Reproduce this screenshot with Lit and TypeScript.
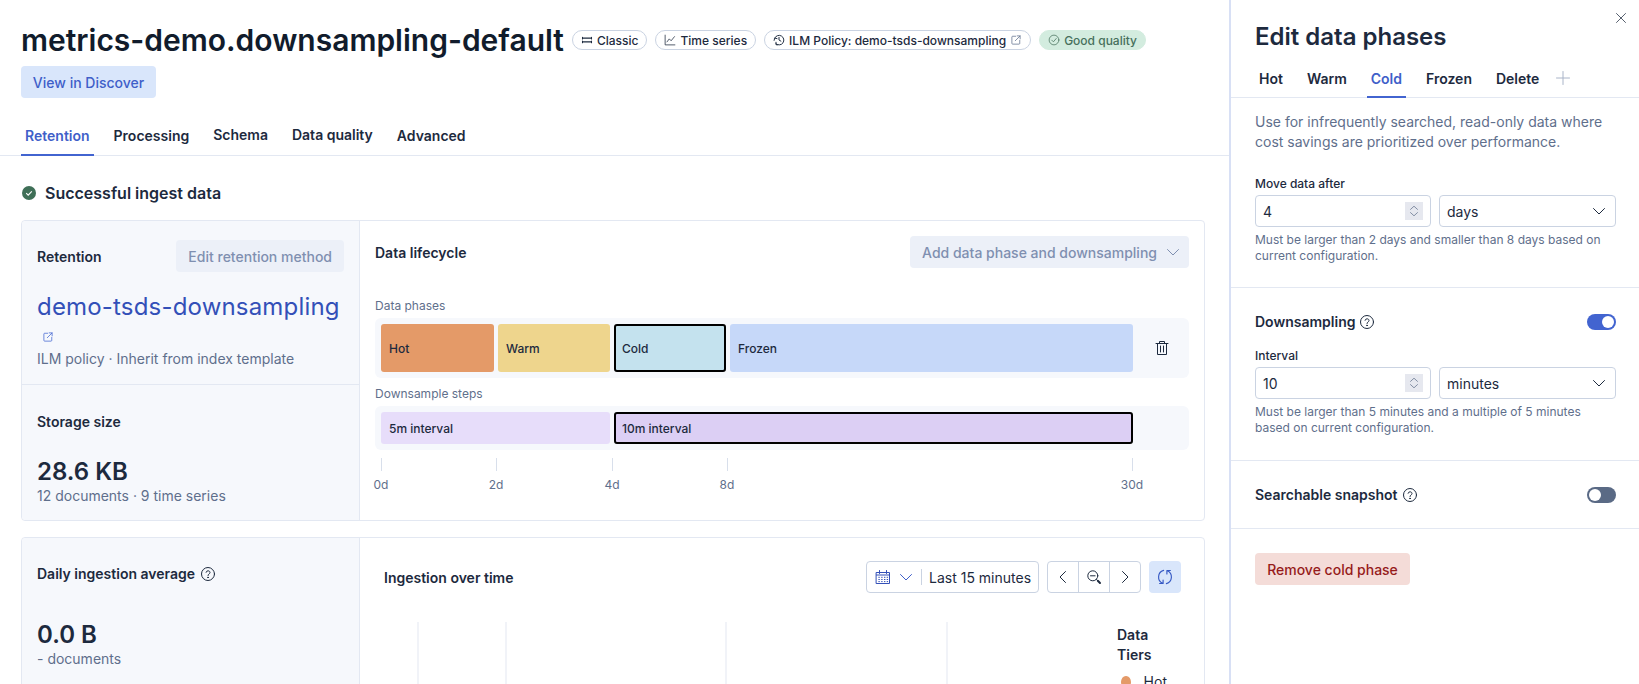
import { LitElement, html, css, svg } from "lit";
import { customElement } from "lit/decorators.js";

const ic = (size: number, body: unknown, color = "currentColor") => html`<svg class="ic" width=${size} height=${size} viewBox="0 0 16 16" fill="none" stroke=${color} stroke-width="1" stroke-linecap="round" stroke-linejoin="round">${body}</svg>`;
const popout = svg`<path d="M7.5 3H3.5a1 1 0 0 0-1 1v8.5a1 1 0 0 0 1 1H12a1 1 0 0 0 1-1V8.5"/><path d="M9.5 2.5h4v4M13.5 2.5 7 9"/>`;
const help = svg`<circle cx="8" cy="8" r="6.5"/><path d="M6.1 6.3A1.95 1.95 0 0 1 8 4.8c1.1 0 2 .7 2 1.7 0 1.5-2 1.4-2 3"/><circle cx="8" cy="11.4" r=".4" fill="currentColor"/>`;
const chevDown = svg`<path d="M2.5 5.5 8 11l5.5-5.5"/>`;
const updown = svg`<path d="M4 6.2 8 2.5l4 3.7M4 9.8l4 3.7 4-3.7"/>`;

const TICKS = [
  { label: "0d", left: 0 },
  { label: "2d", left: 115 },
  { label: "4d", left: 231 },
  { label: "8d", left: 346 },
  { label: "30d", left: 751 },
];

@customElement("app-root")
export class AppRoot extends LitElement {
  static styles = css`
    :host { display: block; height: 684px; overflow: hidden; background: #fff; color: #1d2a3e; font-family: Inter, "Liberation Sans", sans-serif; font-size: 14px; }
    * { box-sizing: border-box; }
    .ic { display: block; flex: none; }
    .page { display: grid; grid-template-columns: 1229px 1fr; height: 684px; }
    .main { min-width: 0; overflow: hidden; }
    .head { padding: 20px 0 0 21px; }
    .title-row { display: flex; align-items: center; height: 40px; }
    h1 { margin: 0; font-size: 30px; line-height: 40px; font-weight: 600; color: #111c2c; white-space: nowrap; }
    .badges { display: flex; align-items: center; gap: 8px; margin-left: 8px; }
    .badge { display: flex; align-items: center; gap: 4px; height: 20px; padding: 0 8px; border: 1px solid #cad3e2; border-radius: 10px; font-size: 12px; font-weight: 500; color: #1d2a3e; white-space: nowrap; background: #fff; }
    .badge.good { background: #d3ecdf; border-color: #d3ecdf; color: #47705c; font-weight: 500; }
    .btn { display: inline-flex; align-items: center; justify-content: center; height: 32px; border-radius: 4px; font-size: 14px; font-weight: 500; padding: 0 12px; white-space: nowrap; }
    .btn.primary { background: #d9e6fb; color: #3f5fc9; width: 135px; margin-top: 6px; }
    .btn.disabled { background: #ecf0f8; color: #7f8fb0; }
    .tabs { display: flex; height: 58px; border-bottom: 1px solid #e3e8f2; padding: 0 0 0 21px; gap: 16px; align-items: flex-end; }
    .tab { height: 36px; display: flex; align-items: center; padding: 0 4px 4px; font-weight: 600; font-size: 14px; color: #1d2a3e; border-bottom: 2px solid transparent; margin-bottom: -1px; }
    .tab.up { padding-bottom: 6px; }
    .tab.on { color: #3f5fc9; border-bottom-color: #4264d0; }
    .content { padding: 0 24px 0 21px; }
    .status { display: flex; align-items: center; gap: 8px; height: 20px; margin-top: 27px; font-size: 16px; font-weight: 600; color: #1d2a3e; }
    .card { display: grid; grid-template-columns: 338px 1fr; border: 1px solid #e3e8f2; border-radius: 4px; }
    .card.c1 { margin-top: 17px; height: 301px; }
    .card.c2 { margin-top: 16px; height: 320px; }
    .side { background: #f6f8fc; border-right: 1px solid #e3e8f2; border-radius: 4px 0 0 4px; }
    .sec { padding: 19px 15px 0; }
    .sec.first { height: 164px; border-bottom: 1px solid #e3e8f2; }
    .row { display: flex; align-items: center; justify-content: space-between; }
    .h { font-weight: 600; font-size: 14px; color: #1d2a3e; }
    .inline { display: flex; align-items: center; gap: 5px; }
    .pane .inline { gap: 4px; }
    .link { font-size: 24px; line-height: 32px; color: #3350b8; margin-top: 19px; white-space: nowrap; letter-spacing: 0.18px; }
    .sub { color: #5f6f8c; font-size: 14px; line-height: 20px; }
    .pop { color: #4264d0; margin: 8px 0 6px 5px; }
    .big { font-size: 24px; font-weight: 600; line-height: 32px; color: #1d2a3e; }
    .life { padding: 15px 15px 0 15px; min-width: 0; }
    .small { font-size: 12px; line-height: 16px; color: #5f6f8c; }
    .track { display: flex; gap: 4px; background: #f6f8fc; border-radius: 6px; padding: 6px; margin-top: 4px; position: relative; }
    .seg { display: flex; align-items: center; padding-left: 8px; border-radius: 3px; font-size: 12px; font-weight: 500; color: #1d2a3e; flex: none; }
    .phases .seg { height: 48px; }
    .steps .seg { height: 32px; }
    .seg.sel { border: 2px solid #000; padding-left: 6px; }
    .trash { margin-left: 17px; align-self: center; color: #1d2a3e; }
    .axis { position: relative; height: 36px; margin-top: 8px; margin-left: 6px; font-size: 12px; color: #5f6f8c; }
    .axis-tick { position: absolute; top: 0; width: 1px; height: 13px; background: #d8dfeb; }
    .axis-label { position: absolute; top: 19px; transform: translateX(-50%); line-height: 16px; }
    .ing-left { padding: 27px 15px 0; }
    .ing { padding: 23px 23px 0 24px; min-width: 0; }
    .tools { display: flex; align-items: center; gap: 8px; }
    .picker { display: flex; align-items: center; height: 32px; width: 173px; border: 1px solid #cad3e2; border-radius: 4px; padding-left: 8px; color: #1d2a3e; }
    .picker .cal { color: #3350b8; }
    .picker .chev { color: #3f5fc9; margin-left: 7px; }
    .sep { width: 1px; height: 16px; background: #cad3e2; margin: 0 7px 0 7px; }
    .group { display: flex; height: 32px; border: 1px solid #cad3e2; border-radius: 4px; }
    .group > div { width: 31px; display: flex; align-items: center; justify-content: center; border-right: 1px solid #cad3e2; }
    .group > div:last-child { border-right: 0; width: 30px; }
    .refresh { width: 32px; height: 32px; border-radius: 4px; background: #d9e6fb; color: #3558c4; display: flex; align-items: center; justify-content: center; }
    .chart { position: relative; height: 200px; margin-top: 29px; margin-left: -24px; }
    .gl { position: absolute; top: 0; bottom: 0; width: 2px; background: #f1f3f8; }
    .tiers { position: absolute; left: 757px; top: 3px; font-weight: 600; line-height: 20px; width: 50px; }
    .tier { display: flex; align-items: center; gap: 13px; font-weight: 400; margin: 7px 0 0 4px; }
    .dot { width: 12px; height: 12px; border-radius: 50%; background: #e49a68; }
    .panel { border-left: 2px solid #d8e0f5; position: relative; min-width: 0; }
    .close { position: absolute; top: 12px; right: 12px; color: #1d2a3e; }
    .panel h2 { margin: 0; padding: 21px 0 0 24px; font-size: 24px; line-height: 32px; font-weight: 600; color: #1d2a3e; white-space: nowrap; }
    .ptabs { display: flex; height: 45px; gap: 16px; padding-left: 24px; border-bottom: 1px solid #e3e8f2; align-items: flex-end; }
    .ptabs .tab { padding-bottom: 2px; }
    .ptabs .plus { align-self: center; color: #a9b4c8; margin: 0 0 0 -4px; position: relative; top: 3px; }
    .desc { padding-top: 14px; color: #5f6f8c; line-height: 20px; }
    .pane { padding: 0 23px 0 24px; border-bottom: 1px solid #e3e8f2; }
    .p1 { height: 190px; }
    .p2 { height: 173px; padding-top: 25px; }
    .p3 { height: 68px; display: flex; align-items: center; justify-content: space-between; }
    .plabel { font-size: 12px; font-weight: 500; line-height: 16px; color: #1d2a3e; }
    .fields { display: flex; gap: 8px; margin-top: 3px; }
    .field { height: 32px; border: 1px solid #cad3e2; border-radius: 4px; display: flex; align-items: center; justify-content: space-between; color: #1d2a3e; }
    .field.num { width: 176px; padding: 0 7px 0 7px; }
    .field.sel2 { flex: 1; padding: 0 8px 0 7px; }
    .spin { width: 18px; height: 18px; background: #e6e8ef; color: #76839a; display: flex; align-items: center; justify-content: center; }
    .help { font-size: 12px; line-height: 16px; color: #5f6f8c; margin-top: 5px; }
    .hq { color: #1d2a3e; }
    .toggle { width: 29px; height: 16px; border-radius: 8px; position: relative; flex: none; }
    .toggle::after { content: ""; position: absolute; top: 2px; width: 12px; height: 12px; border-radius: 50%; background: #fff; }
    .toggle.on { background: #4264d0; }
    .toggle.on::after { right: 2px; }
    .toggle.off { background: #5a6a85; }
    .toggle.off::after { left: 2px; }
    .danger { margin: 24px 0 0 24px; height: 32px; width: 155px; background: #f4dcd8; color: #961b1b; }
  `;

  render() {
    return html`<div class="page">
      <div class="main">
        <div class="head">
          <div class="title-row">
            <h1>metrics-demo.downsampling-default</h1>
            <div class="badges">
              <span class="badge">${ic(12, svg`<g stroke-width="1.4"><path d="M2 5.5h12M2 10.5h12M2 4.5v2M14 4.5v2M2 9.5v2M14 9.5v2"/></g>`)}Classic</span>
              <span class="badge">${ic(12, svg`<path d="M1.5 1.5v13h13M4 10.5 7 6.5l2.5 2.5 4.5-5.5"/>`)}Time series</span>
              <span class="badge">${ic(12, svg`<g stroke-width="1.3"><path d="M2.2 5.5A6.4 6.4 0 1 1 4 13.2M1.5 8.5l.8-3 3 .6M8 4.5V8l2.5 1.5M4 11v3.3h2.2"/></g>`)}ILM Policy: demo-tsds-downsampling${ic(12, popout, "#5f6f8c")}</span>
              <span class="badge good">${ic(12, svg`<circle cx="8" cy="8" r="6.5"/><path d="m5 8.2 2.2 2.2L11 6"/>`)}<span>Good quality</span></span>
            </div>
          </div>
          <div class="btn primary">View in Discover</div>
        </div>
        <div class="tabs">
          <div class="tab on">Retention</div><div class="tab">Processing</div><div class="tab up">Schema</div><div class="tab up">Data quality</div><div class="tab">Advanced</div>
        </div>
        <div class="content">
          <div class="status">
            <svg class="ic" width="16" height="16" viewBox="0 0 16 16"><circle cx="8" cy="8" r="7" fill="#3f6f57"/><path d="m5.2 8.2 2 2L10.8 6.4" fill="none" stroke="#fff" stroke-width="1.1"/></svg>
            Successful ingest data
          </div>
          <div class="card c1">
            <div class="side">
              <div class="sec first">
                <div class="row"><span class="h">Retention</span><span class="btn disabled">Edit retention method</span></div>
                <div class="link">demo-tsds-downsampling</div>
                <div class="pop">${ic(12, popout)}</div>
                <div class="sub">ILM policy · Inherit from index template</div>
              </div>
              <div class="sec">
                <div class="h" style="margin-top:9px">Storage size</div>
                <div class="big" style="margin-top:26px">28.6 KB</div>
                <div class="sub" style="margin-top:-2px">12 documents · 9 time series</div>
              </div>
            </div>
            <div class="life">
              <div class="row"><span class="h">Data lifecycle</span><span class="btn disabled" style="padding-right:8px;gap:8px">Add data phase and downsampling ${ic(16, chevDown)}</span></div>
              <div class="small" style="margin-top:30px">Data phases</div>
              <div class="track phases">
                <div class="seg" style="width:113px;background:#e49a68">Hot</div>
                <div class="seg" style="width:112px;background:#eed58d;margin-right:0">Warm</div>
                <div class="seg sel" style="width:112px;background:#c4e2ee">Cold</div>
                <div class="seg" style="width:403px;background:#c6d8f9">Frozen</div>
                <div class="trash">${ic(16, svg`<path d="M2 3.5h12M5.5 3.5V1.5h5v2M3.5 3.5v11h9v-11M6.5 6v6M9.5 6v6"/>`)}</div>
              </div>
              <div class="small" style="margin-top:8px">Downsample steps</div>
              <div class="track steps">
                <div class="seg" style="width:229px;background:#e7ddfa">5m interval</div>
                <div class="seg sel" style="width:519px;background:#dccff4">10m interval</div>
              </div>
              <div class="axis">
                ${TICKS.map(t => html`<div class="axis-tick" style="left:${t.left}px"></div><div class="axis-label" style="left:${t.left}px">${t.label}</div>`)}
              </div>
            </div>
          </div>
          <div class="card c2">
            <div class="side ing-left">
              <div class="inline h">Daily ingestion average <span class="hq">${ic(16, help)}</span></div>
              <div class="big" style="margin-top:37px">0.0 B</div>
              <div class="sub" style="margin-top:-2px">- documents</div>
            </div>
            <div class="ing">
              <div class="row">
                <span class="h">Ingestion over time</span>
                <div class="tools">
                  <div class="picker">
                    <span class="cal">${ic(16, svg`<path d="M1.5 3.5h13v11h-13zM1.5 6h13"/><path d="M4.5 1.5v3M11.5 1.5v3"/><path stroke-width="1" d="M3.8 8.3h.6M6.6 8.3h.6M9.4 8.3h.6M12.1 8.3h.6M3.8 10.5h.6M6.6 10.5h.6M9.4 10.5h.6M12.1 10.5h.6M3.8 12.6h.6M6.6 12.6h.6M9.4 12.6h.6M12.1 12.6h.6"/>`)}</span>
                    <span class="chev">${ic(16, chevDown)}</span>
                    <span class="sep"></span>Last 15 minutes
                  </div>
                  <div class="group">
                    <div>${ic(16, svg`<path d="M10.5 2.5 5 8l5.5 5.5"/>`)}</div>
                    <div>${ic(16, svg`<circle cx="6.8" cy="6.8" r="5"/><path d="M4.5 6.8h4.6M10.5 10.5l1 1"/><path stroke-width="2" d="m11.8 11.8 2.2 2.2"/>`)}</div>
                    <div>${ic(16, svg`<path d="M5.5 2.5 11 8l-5.5 5.5"/>`)}</div>
                  </div>
                  <div class="refresh">${ic(16, svg`<g stroke-width="1.15"><path d="M6.6 1.4A6.9 6.9 0 0 0 5.6 14.3M6.1 11v3.5H2.6M9.4 14.6A6.9 6.9 0 0 0 10.4 1.7M9.9 5V1.5h3.5"/></g>`)}</div>
                </div>
              </div>
              <div class="chart">
                ${[57, 145, 365, 586].map(x => html`<div class="gl" style="left:${x}px"></div>`)}
                <div class="tiers">Data Tiers
                  <div class="tier"><span class="dot"></span>Hot</div>
                </div>
              </div>
            </div>
          </div>
        </div>
      </div>
      <aside class="panel">
        <div class="close">${ic(12, svg`<path d="m2 2 12 12M14 2 2 14"/>`)}</div>
        <h2>Edit data phases</h2>
        <div class="ptabs">
          <div class="tab">Hot</div><div class="tab">Warm</div><div class="tab on">Cold</div><div class="tab">Frozen</div><div class="tab">Delete</div>
          <div class="plus">${ic(16, svg`<path d="M8 1.5v13M1.5 8h13"/>`)}</div>
        </div>
        <div class="pane p1">
          <div class="desc">Use for infrequently searched, read-only data where cost savings are prioritized over performance.</div>
          <div class="plabel" style="margin-top:24px">Move data after</div>
          <div class="fields">
            <div class="field num"><span>4</span><span class="spin">${ic(14, updown)}</span></div>
            <div class="field sel2"><span>days</span>${ic(16, chevDown)}</div>
          </div>
          <div class="help">Must be larger than 2 days and smaller than 8 days based on current configuration.</div>
        </div>
        <div class="pane p2">
          <div class="row"><span class="inline h">Downsampling <span class="hq">${ic(16, help)}</span></span><span class="toggle on"></span></div>
          <div class="plabel" style="margin-top:18px">Interval</div>
          <div class="fields">
            <div class="field num"><span>10</span><span class="spin">${ic(14, updown)}</span></div>
            <div class="field sel2"><span>minutes</span>${ic(16, chevDown)}</div>
          </div>
          <div class="help">Must be larger than 5 minutes and a multiple of 5 minutes based on current configuration.</div>
        </div>
        <div class="pane p3"><span class="inline h">Searchable snapshot <span class="hq">${ic(16, help)}</span></span><span class="toggle off"></span></div>
        <div class="btn danger">Remove cold phase</div>
      </aside>
    </div>`;
  }
}
